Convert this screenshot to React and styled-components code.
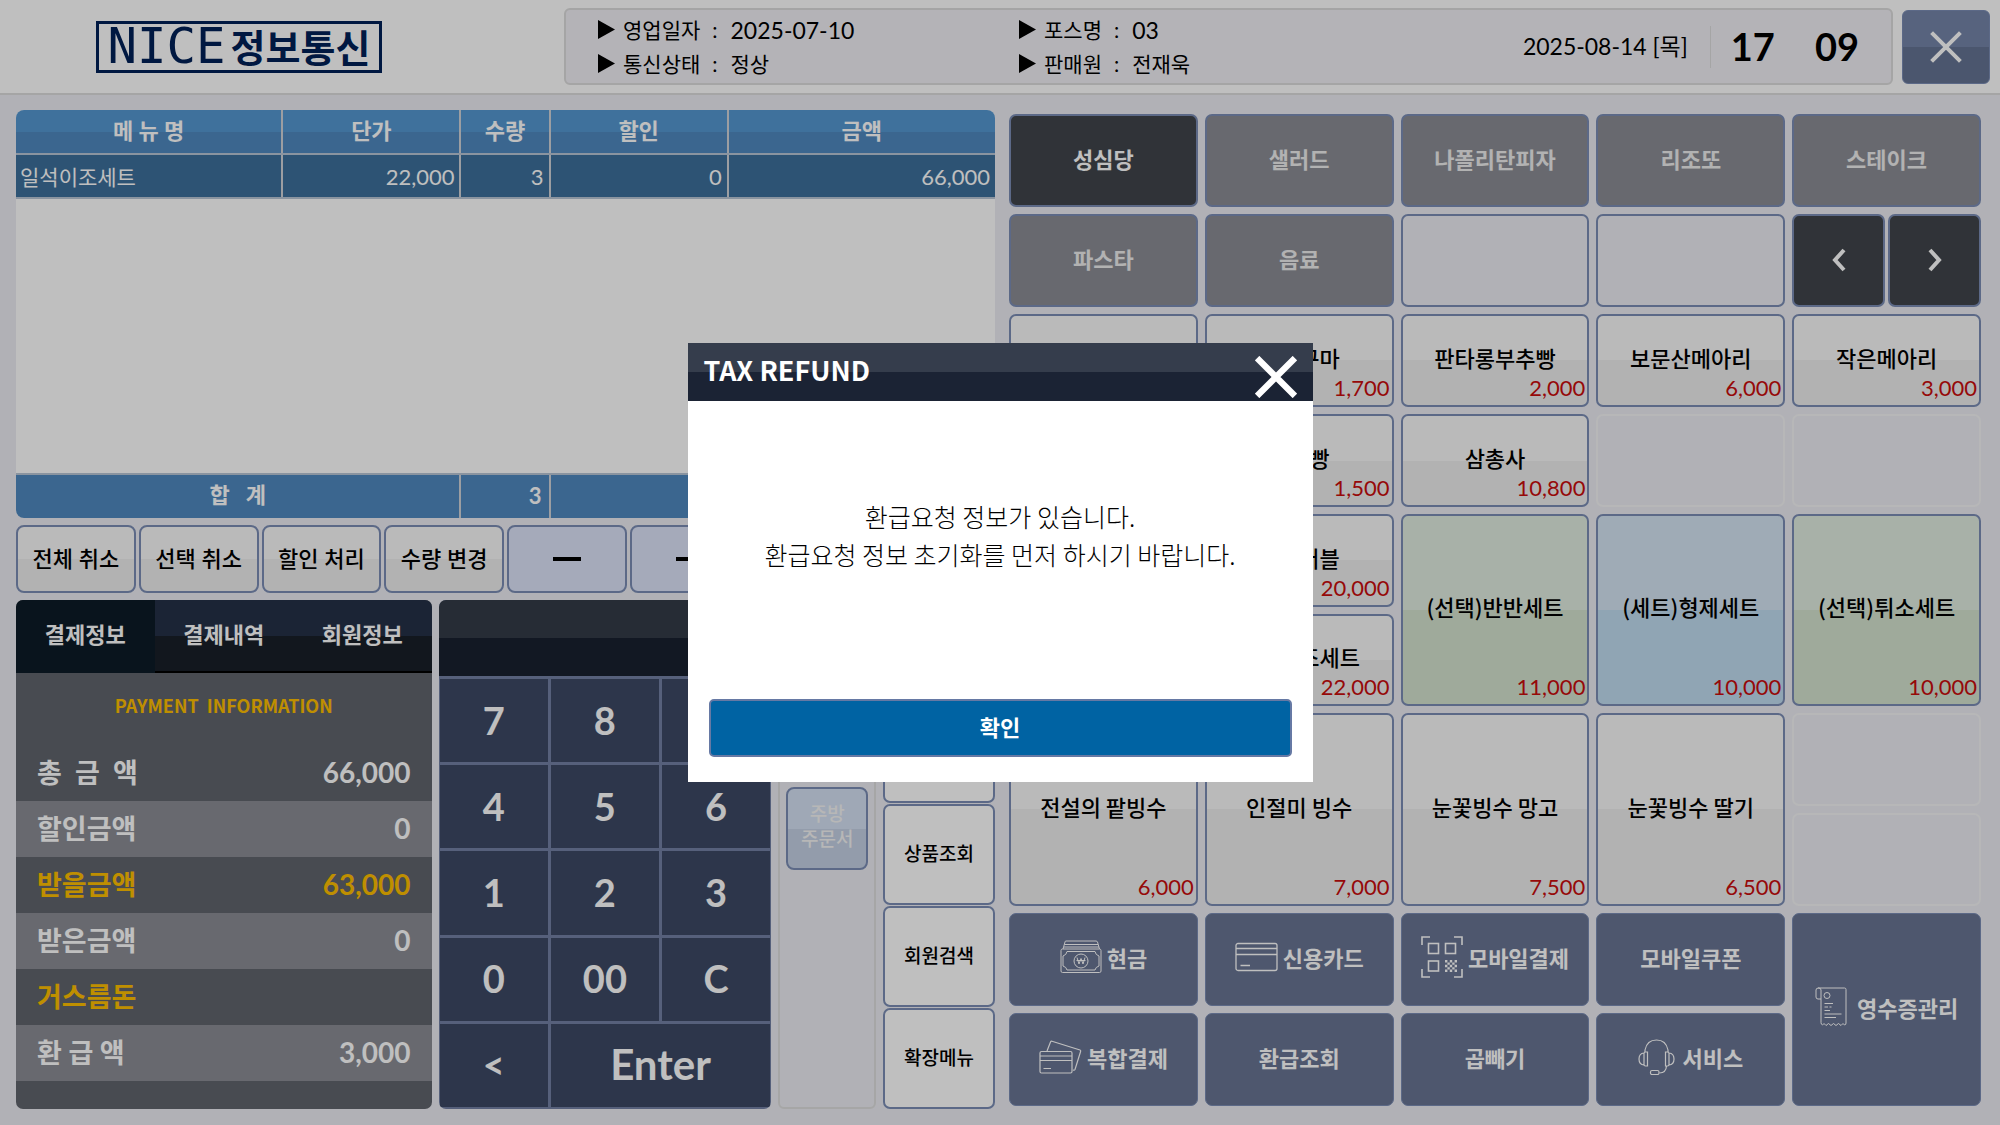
import React from "react"

import styled, { createGlobalStyle, css } from "styled-components"

const GlobalStyle = createGlobalStyle`
  * {
    box-sizing: border-box;
  }
  body {
    margin: 0;
    background: #ecedf3;
    color: #000;
    font-family: Lato, "Noto Sans CJK KR", sans-serif;
    font-size: 22px;
  }
  button {
    margin: 0;
    padding: 0 0 5px;
    font: inherit;
    color: inherit;
    cursor: pointer;
  }
`

const korean = `"Noto Sans CJK KR", sans-serif`
const line = "#7b8db5"

const split = (top, bottom) => css`
  background: linear-gradient(${top} 50%, ${bottom} 50%) border-box;
`

const Page = styled.div`
  min-height: 100vh;
  display: flex;
  flex-direction: column;
`

/* header */

const Header = styled.header`
  display: flex;
  align-items: center;
  gap: 9px;
  padding: 8px 10px 8px 96px;
  background: #fff;
  border-bottom: 2px solid #dcdcdc;
`

const Logo = styled.div`
  width: 286px;
  height: 52px;
  margin-right: 173px;
  display: flex;
  align-items: center;
  justify-content: center;
  gap: 5px;
  border: 3px solid #002157;
  color: #002157;
  font-size: 38px;
  font-weight: 700;
  line-height: 44px;
  white-space: nowrap;

  span {
    font-family: "DejaVu Sans Mono", monospace;
    font-size: 49px;
    font-weight: 400;
  }
`

const StatusBar = styled.div`
  flex: 1;
  height: 77px;
  display: flex;
  align-items: center;
  padding: 0 30px 0 32px;
  background: #f0eff5;
  border: 2px solid #dcdcdc;
  border-radius: 6px;
`

const StatusGrid = styled.dl`
  flex: 1;
  margin: 0;
  display: grid;
  grid-template-columns: 421px 1fr;
  font-size: 21px;
  line-height: 34px;
`

const StatusItem = styled.div`
  display: flex;
  align-items: center;

  svg {
    margin-right: 8px;
  }
  dd {
    margin: 0;
    font-size: ${p => (p.$numeric ? 23 : 21)}px;
  }
  dt::after {
    content: ":";
    margin: 0 13px 0 12px;
  }
`

const Today = styled.div`
  height: 42px;
  padding-right: 22px;
  border-right: 1px solid #dcdcdc;
  font-size: 23px;
  line-height: 40px;
`

const Clock = styled.div`
  display: flex;
  gap: 40px;
  padding: 0 2px 2px 20px;
  font-size: 38px;
  font-weight: 700;
`

const CloseButton = styled.button`
  width: 88px;
  height: 74px;
  padding: 0;
  display: grid;
  place-items: center;
  ${split("#7585a9", "#657393")}
  border: 1px solid ${line};
  border-radius: 6px;
`

/* page body */

const Body = styled.main`
  flex: 1;
  display: grid;
  grid-template-columns: 979fr 972fr;
  gap: 14px;
  padding: 15px 19px 16px 16px;
`

const Left = styled.div`
  display: flex;
  flex-direction: column;
  gap: 7px;
`

const OrderBox = styled.div`
  flex: 1;
  display: flex;
  flex-direction: column;
  background: #fff;
  border-radius: 8px;
  overflow: hidden;
`

const OrderTable = styled.table`
  width: 100%;
  height: 100%;
  flex: 1;
  table-layout: fixed;
  border-collapse: collapse;
  color: #fff;

  th,
  td {
    height: 44px;
    padding: 0 5px;
    border-right: 2px solid #d0d3d8;
    border-bottom: 2px solid #b9c6d6;
  }
  th {
    padding-bottom: 5px;
  }
  th:last-child,
  td:last-child {
    border-right: 0;
  }
  td {
    text-align: right;
  }
  thead th {
    ${split("#5597d1", "#4f88bf")}
  }
  tbody td {
    background: #3d6f9b;
  }
  tbody td:first-child {
    padding: 0 4px;
    font-size: 21px;
    text-align: left;
  }
  tbody tr:last-child td {
    height: auto;
    background: #fff;
  }
  tfoot th,
  tfoot td {
    padding: 0 7px 7px;
    background: #4f88bf;
    border-bottom: 0;
    font-weight: 700;
  }
  tfoot td {
    padding-bottom: 2px;
  }
`

const ActionRow = styled.div`
  display: grid;
  grid-template-columns: repeat(8, 1fr);
  gap: 3px;
`

const ActionButton = styled.button`
  height: 68px;
  padding: ${p => (p.$tint ? 0 : "0 0 4px")};
  display: grid;
  place-items: center;
  ${p => (p.$tint ? "background: #dce3f9;" : split("#f8f8f8", "#eeeeee"))}
  border: 2px solid ${line};
  border-radius: 8px;
  font-weight: 500;
`

const Lower = styled.div`
  display: grid;
  grid-template-columns: 416fr 333fr 98fr 112fr;
  gap: 7px;
  height: 509px;
`

const Payment = styled.section`
  display: flex;
  flex-direction: column;
  background: #61656d;
  border-radius: 7px;
  overflow: hidden;
  color: #fff;
  font-weight: 700;

  h2 {
    margin: 0;
    height: 72px;
    font-family: ${korean};
    font-size: 18px;
    font-weight: 700;
    line-height: 64px;
    text-align: center;
    white-space: pre;
    color: #ffbf00;
  }
`

const Tabs = styled.div`
  display: grid;
  grid-template-columns: repeat(3, 1fr);
  height: 73px;
`

const Tab = styled.button`
  ${p => (p.$active ? "background: #0d1b27;" : split("#253147", "#181f29"))}
  border: 0;
  border-bottom: 2px solid ${p => (p.$active ? "#0d1b27" : "#000")};
`

const Amounts = styled.dl`
  margin: 0;
  font-size: 27px;
`

const AmountRow = styled.div`
  height: 56px;
  display: flex;
  align-items: center;
  justify-content: space-between;
  padding: 0 21px 3px;
  background: ${p => (p.$shade ? "#8b8d95" : "#61656d")};
  color: ${p => (p.$accent ? "#ffbf00" : "#fff")};

  dt {
    white-space: pre;
  }
  dd {
    margin: 0;
    font-size: 28px;
  }
`

const Keypad = styled.section`
  display: grid;
  grid-template-columns: repeat(3, 1fr);
  grid-template-rows: 76px repeat(5, 1fr);
  gap: 3px;
  padding: 0 1px 2px;
  background: #7381a4;
  border-radius: 7px;
  overflow: hidden;
`

const Display = styled.output`
  grid-column: 1 / -1;
  margin: 0 -1px;
  ${split("#333b47", "#19212f")}
`

const Key = styled.button`
  grid-column: span ${p => p.$span || 1};
  padding-bottom: 2px;
  background: #3c4964;
  border: 0;
  color: #fff;
  font-size: ${p => (p.$span ? 42 : 38)}px;
  font-weight: 700;
`

const PrinterStrip = styled.div`
  padding: 92px 6px 0;
  display: flex;
  flex-direction: column;
  gap: 10px;
  border: 2px solid #dedede;
  border-radius: 6px;
`

const PrinterButton = styled.button`
  height: 83px;
  ${split("#d4e1f3", "#c4d0e4")}
  border: 2px solid ${line};
  border-radius: 8px;
  color: #f4f4f4;
  font-size: 19px;
  font-weight: 500;
  line-height: 25px;
`

const SideMenu = styled.div`
  display: grid;
  grid-template-rows: repeat(5, 1fr);
  gap: 1px;
`

const SideButton = styled.button`
  background: #fff;
  border: 2px solid ${line};
  border-radius: 7px;
  font-size: 19px;
  font-weight: 500;
`

/* right hand grid */

const Board = styled.div`
  display: grid;
  grid-template-columns: repeat(5, 1fr);
  grid-template-rows: repeat(10, 1fr);
  gap: 7px;
  margin: 4px 0 3px;
`

const Cell = styled.button`
  min-width: 0;
  border: 2px solid ${line};
  border-radius: 7px;
`

const Category = styled(Cell)`
  background: ${p => (p.$active ? "#41454b" : "#8b8d95")};
  color: ${p => (p.$active ? "#fff" : "#eee")};
  font-weight: 700;
`

const EmptyCategory = styled(Cell)`
  background: transparent;
`

const Pager = styled.div`
  display: grid;
  grid-template-columns: 1fr 1fr;
  gap: 3px;
`

const PagerButton = styled(Cell)`
  padding: 0;
  display: grid;
  place-items: center;
  background: #41454b;
`

const tones = {
  plain: ["#f8f8f8", "#eeeeee"],
  green: ["#e0ece0", "#d4e3cf"],
  blue: ["#d5e5f3", "#c1dcf0"],
}

const Product = styled(Cell)`
  position: relative;
  grid-column: ${p => p.$col};
  grid-row: ${p => p.$row} / span ${p => p.$rows};
  padding-bottom: 7px;
  ${p => split(...tones[p.$tone])}
  font-family: ${korean};
  font-weight: 500;
`

const Price = styled.span`
  position: absolute;
  right: 2px;
  bottom: 4px;
  font-family: Lato, sans-serif;
  font-weight: 400;
  line-height: 26px;
  color: #c80c0c;
`

const EmptyProduct = styled.div`
  grid-column: ${p => p.$col};
  grid-row: ${p => p.$row};
  border: 2px solid #f4f4f6;
  border-radius: 7px;
`

const PayButton = styled(Cell)`
  grid-column: ${p => p.$col};
  grid-row: ${p => p.$row} / span ${p => p.$rows || 1};
  display: flex;
  align-items: center;
  justify-content: center;
  gap: ${p => p.$gap || 5}px;
  background: #687493;
  border: 1px solid ${line};
  color: #fff;
  font-weight: 700;

  svg {
    flex: none;
  }
`

/* dialog */

const Backdrop = styled.div`
  position: fixed;
  inset: 0;
  display: grid;
  place-items: center;
  background: rgba(0, 0, 0, 0.25);
`

const Dialog = styled.section`
  width: 625px;
  background: #fff;
`

const DialogHeader = styled.header`
  height: 58px;
  display: flex;
  align-items: center;
  justify-content: space-between;
  padding: 0 16px;
  ${split("#353d4c", "#1b2334")}
  color: #fff;

  h1 {
    margin: 0;
    padding-bottom: 4px;
    font-family: ${korean};
    font-size: 27px;
    font-weight: 700;
    line-height: 54px;
  }
  button {
    padding: 10px 0 0;
    background: none;
    border: 0;
  }
  svg {
    display: block;
  }
`

const Message = styled.p`
  margin: 0;
  padding: 96px 0 126px;
  font-family: ${korean};
  font-size: 25px;
  font-weight: 300;
  line-height: 38px;
  text-align: center;
`

const ConfirmButton = styled.button`
  display: block;
  width: calc(100% - 42px);
  height: 58px;
  margin: 0 auto 25px;
  background: #0063a3;
  border: 2px solid #6679a4;
  border-radius: 5px;
  color: #fff;
  font-weight: 700;
`

/* icons */

const Cross = ({ size, weight }) => (
  <svg width={size} height={size} viewBox="0 0 40 40" aria-hidden="true">
    <path d="M2 2 38 38M38 2 2 38" stroke="#fff" strokeWidth={weight} />
  </svg>
)

const Triangle = () => (
  <svg width="17" height="19" viewBox="0 0 17 19" aria-hidden="true">
    <path d="M0 0 17 9.500 0 19Z" />
  </svg>
)

const Outline = ({ w, h, children, weight = 1.2 }) => (
  <svg
    width={w}
    height={h}
    viewBox={`0 0 ${w} ${h}`}
    fill="none"
    stroke="#fff"
    strokeWidth={weight}
    aria-hidden="true"
  >
    {children}
  </svg>
)

const Arrow = ({ d }) => (
  <Outline w={16} h={24} weight={4}>
    <path d={d} />
  </Outline>
)

const CashIcon = () => (
  <Outline w={42} h={34} weight={1}>
    <path d="M3 9 5 2Q5 1 6 1H36Q37 1 37.500 2L39.500 9M4.500 4.500H38M4 7H39" />
    <rect x="1" y="9" width="40" height="23.500" rx="1.500" />
    <path d="M7 11.500H35Q35.500 15 39 16V26Q35.500 27 35 30H7Q6.500 27 3 26V16Q6.500 15 7 11.500Z" />
    <circle cx="21" cy="21" r="7" />
    <path d="M17 17.500 19 24 21 18.500 23 24 25 17.500M16.500 20.500H25.500" />
  </Outline>
)

const CardIcon = () => (
  <Outline w={43} h={30} weight={1.3}>
    <rect x="1" y="1.500" width="41" height="27" rx="2" />
    <path d="M1 6.500H42M1 12.500H42M5.500 23.500H15" />
  </Outline>
)

const QrIcon = () => (
  <Outline w={42} h={42} weight={1.6}>
    <path d="M1 9V1H9M33 1H41V9M41 33V41H33M9 41H1V33" />
    <rect x="7.500" y="7.500" width="10" height="10" />
    <rect x="24.500" y="7.500" width="10" height="10" />
    <rect x="7.500" y="25" width="10" height="10" />
    <path
      d="M24 25.200H36M24 30H36M24 34.800H36"
      strokeWidth="2.400"
      strokeDasharray="2.400 2.400"
    />
    <path
      d="M26.400 27.600H36M26.400 32.400H36"
      strokeWidth="2.400"
      strokeDasharray="2.400 2.400"
    />
  </Outline>
)

const CardsIcon = () => (
  <Outline w={43} h={34}>
    <rect x="1" y="11.500" width="32" height="21.500" rx="1.500" />
    <path d="M1 16H33M1 20.500H33M4.500 28.500H12" />
    <path d="M8 11 11.500 2Q12 1 13 1.300L41 10Q42 10.500 41.600 11.500L36 29.500Q35.500 30.500 34 30" />
  </Outline>
)

const HeadsetIcon = () => (
  <Outline w={37} h={36}>
    <path d="M7 13V11Q9 1 18.500 1T30 11V13" />
    <path d="M9.500 13V27H7.500Q6 27 6 25.500V14.500Q6 13 7.500 13ZM6 14Q1 14.500 1 20T6 26M27.500 13V27H29.500Q31 27 31 25.500V14.500Q31 13 29.500 13ZM31 14Q36 14.500 36 20T31 26M28.500 27Q28 34 21.500 34" />
    <rect x="12.500" y="31.500" width="8.500" height="4" rx="1.500" />
  </Outline>
)

const ReceiptIcon = () => (
  <Outline w={32} h={40} weight={1}>
    <path d="M3 1H29.500Q31 1 31 2.500V36Q31 38 29.500 38L28 36.500 26 38.500 23.500 36.500 21 38.500 18.500 36.500 16 38.500 13.500 36.500 11 38.500 9 36.500 7.500 38Q6 37.500 6 35.500V3Q6 1 3.500 1 1 1 1 3V10Q1 12 3 12H6" />
    <circle cx="12" cy="8.500" r="3" />
    <path d="M9.500 16.500H18M9.500 20H13M14.500 20H16.500M9.500 23.500H15M9.500 27H26.500M9.500 30.500H21" />
  </Outline>
)

const statusItems = [
  { label: "영업일자", value: "2025-07-10", numeric: true },
  { label: "포스명", value: "03", numeric: true },
  { label: "통신상태", value: "정상" },
  { label: "판매원", value: "전재욱" },
]

const amounts = [
  { label: "총  금  액", value: "66,000" },
  { label: "할인금액", value: "0", shade: true },
  { label: "받을금액", value: "63,000", accent: true },
  { label: "받은금액", value: "0", shade: true },
  { label: "거스름돈", value: "", accent: true },
  { label: "환 급 액", value: "3,000", shade: true },
]

const keys = ["7", "8", "9", "4", "5", "6", "1", "2", "3", "0", "00", "C", "<"]

const categories = [
  "성심당",
  "샐러드",
  "나폴리탄피자",
  "리조또",
  "스테이크",
  "파스타",
  "음료",
]

const products = [
  { col: 1, row: 3 },
  { col: 2, row: 3, name: "튀소구마", price: "1,700" },
  { col: 3, row: 3, name: "판타롱부추빵", price: "2,000" },
  { col: 4, row: 3, name: "보문산메아리", price: "6,000" },
  { col: 5, row: 3, name: "작은메아리", price: "3,000" },
  { col: 1, row: 4 },
  { col: 2, row: 4, name: "단팥빵", price: "1,500" },
  { col: 3, row: 4, name: "삼총사", price: "10,800" },
  { col: 1, row: 5 },
  { col: 2, row: 5, name: "튀소러블", price: "20,000" },
  { col: 3, row: 5, rows: 2, name: "(선택)반반세트", price: "11,000", tone: "green" },
  { col: 4, row: 5, rows: 2, name: "(세트)형제세트", price: "10,000", tone: "blue" },
  { col: 5, row: 5, rows: 2, name: "(선택)튀소세트", price: "10,000", tone: "green" },
  { col: 1, row: 6 },
  { col: 2, row: 6, name: "일석이조세트", price: "22,000" },
  { col: 1, row: 7, rows: 2, name: "전설의 팥빙수", price: "6,000" },
  { col: 2, row: 7, rows: 2, name: "인절미 빙수", price: "7,000" },
  { col: 3, row: 7, rows: 2, name: "눈꽃빙수 망고", price: "7,500" },
  { col: 4, row: 7, rows: 2, name: "눈꽃빙수 딸기", price: "6,500" },
]

const emptyProducts = [
  [4, 4],
  [5, 4],
  [5, 7],
  [5, 8],
]

const payments = [
  { col: 1, row: 9, name: "현금", Icon: CashIcon },
  { col: 2, row: 9, name: "신용카드", Icon: CardIcon },
  { col: 3, row: 9, name: "모바일결제", Icon: QrIcon },
  { col: 4, row: 9, name: "모바일쿠폰" },
  { col: 5, row: 9, rows: 2, name: "영수증관리", Icon: ReceiptIcon, gap: 10 },
  { col: 1, row: 10, name: "복합결제", Icon: CardsIcon },
  { col: 2, row: 10, name: "환급조회" },
  { col: 3, row: 10, name: "곱빼기" },
  { col: 4, row: 10, name: "서비스", Icon: HeadsetIcon, gap: 7 },
]

const TopBar = () => (
  <Header>
    <Logo>
      <span>NICE</span>정보통신
    </Logo>
    <StatusBar>
      <StatusGrid>
        {statusItems.map(({ label, value, numeric }) => (
          <StatusItem key={label} $numeric={numeric}>
            <Triangle />
            <dt>{label}</dt>
            <dd>{value}</dd>
          </StatusItem>
        ))}
      </StatusGrid>
      <Today>2025-08-14 [목]</Today>
      <Clock>
        <span>17</span>
        <span>09</span>
      </Clock>
    </StatusBar>
    <CloseButton aria-label="종료">
      <Cross size={32} weight={5} />
    </CloseButton>
  </Header>
)

const Order = () => (
  <OrderBox>
    <OrderTable>
      <colgroup>
        <col style={{ width: "27.2%" }} />
        <col style={{ width: "18.2%" }} />
        <col style={{ width: "9.1%" }} />
        <col style={{ width: "18.2%" }} />
        <col />
      </colgroup>
      <thead>
        <tr>
          <th>메 뉴 명</th>
          <th>단가</th>
          <th>수량</th>
          <th>할인</th>
          <th>금액</th>
        </tr>
      </thead>
      <tbody>
        <tr>
          <td>일석이조세트</td>
          <td>22,000</td>
          <td>3</td>
          <td>0</td>
          <td>66,000</td>
        </tr>
        <tr>
          <td colSpan={5} />
        </tr>
      </tbody>
      <tfoot>
        <tr>
          <th colSpan={2}>합 &nbsp; 계</th>
          <td>3</td>
          <td colSpan={2} />
        </tr>
      </tfoot>
    </OrderTable>
  </OrderBox>
)

const App = () => (
  <>
    <GlobalStyle />
    <Page>
      <TopBar />
      <Body>
        <Left>
          <Order />
          <ActionRow>
            <ActionButton>전체 취소</ActionButton>
            <ActionButton>선택 취소</ActionButton>
            <ActionButton>할인 처리</ActionButton>
            <ActionButton>수량 변경</ActionButton>
            <ActionButton $tint aria-label="빼기">
              <svg width="28" height="28" viewBox="0 0 28 28" aria-hidden="true">
                <path d="M0 14H28" stroke="#000" strokeWidth="4" />
              </svg>
            </ActionButton>
            <ActionButton $tint aria-label="더하기">
              <svg width="28" height="28" viewBox="0 0 28 28" aria-hidden="true">
                <path d="M0 14H28M14 0V28" stroke="#000" strokeWidth="4" />
              </svg>
            </ActionButton>
            <ActionButton $tint />
            <ActionButton $tint />
          </ActionRow>
          <Lower>
            <Payment>
              <Tabs>
                <Tab $active>결제정보</Tab>
                <Tab>결제내역</Tab>
                <Tab>회원정보</Tab>
              </Tabs>
              <h2>{"PAYMENT  INFORMATION"}</h2>
              <Amounts>
                {amounts.map(({ label, value, shade, accent }) => (
                  <AmountRow key={label} $shade={shade} $accent={accent}>
                    <dt>{label}</dt>
                    <dd>{value}</dd>
                  </AmountRow>
                ))}
              </Amounts>
            </Payment>
            <Keypad>
              <Display />
              {keys.map(key => (
                <Key key={key}>{key}</Key>
              ))}
              <Key $span={2}>Enter</Key>
            </Keypad>
            <PrinterStrip>
              <PrinterButton />
              <PrinterButton>
                주방
                <br />
                주문서
              </PrinterButton>
            </PrinterStrip>
            <SideMenu>
              <SideButton />
              <SideButton />
              <SideButton>상품조회</SideButton>
              <SideButton>회원검색</SideButton>
              <SideButton>확장메뉴</SideButton>
            </SideMenu>
          </Lower>
        </Left>
        <Board>
          {categories.map((name, i) => (
            <Category key={name} $active={i === 0}>
              {name}
            </Category>
          ))}
          <EmptyCategory />
          <EmptyCategory />
          <Pager>
            <PagerButton aria-label="이전">
              <Arrow d="M13 2 4 12 13 22" />
            </PagerButton>
            <PagerButton aria-label="다음">
              <Arrow d="M3 2 12 12 3 22" />
            </PagerButton>
          </Pager>
          {products.map(({ col, row, rows = 1, name, price, tone = "plain" }) => (
            <Product
              key={`${col}-${row}`}
              $col={col}
              $row={row}
              $rows={rows}
              $tone={tone}
            >
              {name}
              {price && <Price>{price}</Price>}
            </Product>
          ))}
          {emptyProducts.map(([col, row]) => (
            <EmptyProduct key={`${col}-${row}`} $col={col} $row={row} />
          ))}
          {payments.map(({ col, row, rows, name, Icon, gap }) => (
            <PayButton key={name} $col={col} $row={row} $rows={rows} $gap={gap}>
              {Icon && <Icon />}
              {name}
            </PayButton>
          ))}
        </Board>
      </Body>
    </Page>
    <Backdrop>
      <Dialog role="dialog" aria-labelledby="dialog-title">
        <DialogHeader>
          <h1 id="dialog-title">TAX REFUND</h1>
          <button aria-label="닫기">
            <Cross size={42} weight={6} />
          </button>
        </DialogHeader>
        <Message>
          환급요청 정보가 있습니다.
          <br />
          환급요청 정보 초기화를 먼저 하시기 바랍니다.
        </Message>
        <ConfirmButton>확인</ConfirmButton>
      </Dialog>
    </Backdrop>
  </>
)

export default App
